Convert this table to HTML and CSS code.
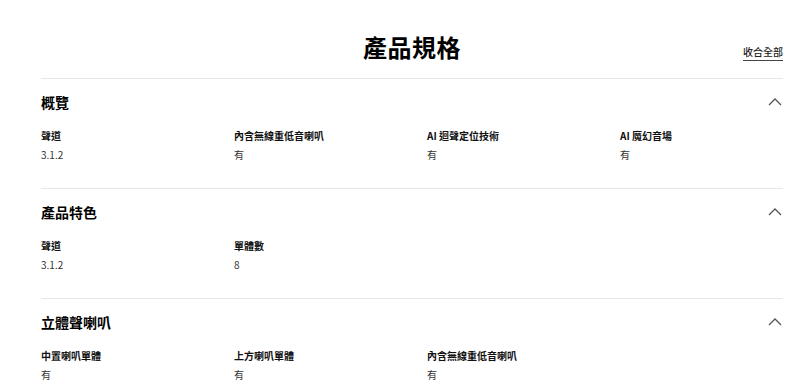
FILE: index.html
```html
<!DOCTYPE html>
<html lang="zh-Hant">
<head>
<meta charset="utf-8">
<link rel="stylesheet" href="styles.css">
</head>
<body>
<div class="page">
  <header class="head">
    <span></span>
    <h1 class="title">產品規格</h1>
    <a class="collapse" href="#">收合全部</a>
  </header>

  <section class="sec">
    <div class="sec-head">
      <h2>概覽</h2>
      <svg class="chev" width="14" height="8" viewBox="0 0 14 8"><polyline points="1,7 7,1 13,7" fill="none" stroke="#555" stroke-width="1.3"/></svg>
    </div>
    <div class="grid">
      <div class="item"><div class="lbl">聲道</div><div class="val">3.1.2</div></div>
      <div class="item"><div class="lbl">內含無線重低音喇叭</div><div class="val">有</div></div>
      <div class="item"><div class="lbl">AI 迴聲定位技術</div><div class="val">有</div></div>
      <div class="item"><div class="lbl">AI 魔幻音場</div><div class="val">有</div></div>
    </div>
  </section>

  <section class="sec">
    <div class="sec-head">
      <h2>產品特色</h2>
      <svg class="chev" width="14" height="8" viewBox="0 0 14 8"><polyline points="1,7 7,1 13,7" fill="none" stroke="#555" stroke-width="1.3"/></svg>
    </div>
    <div class="grid">
      <div class="item"><div class="lbl">聲道</div><div class="val">3.1.2</div></div>
      <div class="item"><div class="lbl">單體數</div><div class="val">8</div></div>
    </div>
  </section>

  <section class="sec">
    <div class="sec-head">
      <h2>立體聲喇叭</h2>
      <svg class="chev" width="14" height="8" viewBox="0 0 14 8"><polyline points="1,7 7,1 13,7" fill="none" stroke="#555" stroke-width="1.3"/></svg>
    </div>
    <div class="grid">
      <div class="item"><div class="lbl">中置喇叭單體</div><div class="val">有</div></div>
      <div class="item"><div class="lbl">上方喇叭單體</div><div class="val">有</div></div>
      <div class="item"><div class="lbl">內含無線重低音喇叭</div><div class="val">有</div></div>
    </div>
  </section>
</div>
</body>
</html>
```

FILE: styles.css
```css
* { box-sizing: border-box; }
html, body { margin: 0; padding: 0; background: #fff; }
body {
  font-family: "Noto Sans CJK TC", "Noto Sans", "Liberation Sans", sans-serif;
  color: #000;
  overflow: hidden;
}
.page {
  margin: 0 17px 0 41px;
}
.head {
  height: 78px;
  display: grid;
  grid-template-columns: 1fr auto 1fr;
  align-items: start;
}
.title {
  margin: 0;
  padding-top: 31px;
  font-size: 24px;
  line-height: 32px;
  font-weight: 700;
  letter-spacing: 0.5px;
}
.collapse {
  justify-self: end;
  margin-top: 44px;
  font-size: 10px;
  line-height: 15px;
  color: #222;
  text-decoration: none;
  border-bottom: 1px solid #444;
  padding-bottom: 1px;
  font-weight: 500;
}
.sec {
  border-top: 1px solid #e6e6e6;
  padding: 13px 0 26px;
}
.sec-head {
  display: flex;
  justify-content: space-between;
  align-items: center;
  height: 20px;
}
.sec-head h2 {
  margin: 0;
  font-size: 14px;
  line-height: 20px;
  font-weight: 700;
}
.chev { margin-right: 1px; }
.grid {
  margin-top: 17px;
  display: grid;
  grid-template-columns: repeat(4, 193px);
}
.lbl {
  font-size: 10px;
  line-height: 14px;
  font-weight: 700;
  color: #111;
}
.val {
  margin-top: 5px;
  font-size: 10px;
  line-height: 14px;
  color: #333;
}
```
